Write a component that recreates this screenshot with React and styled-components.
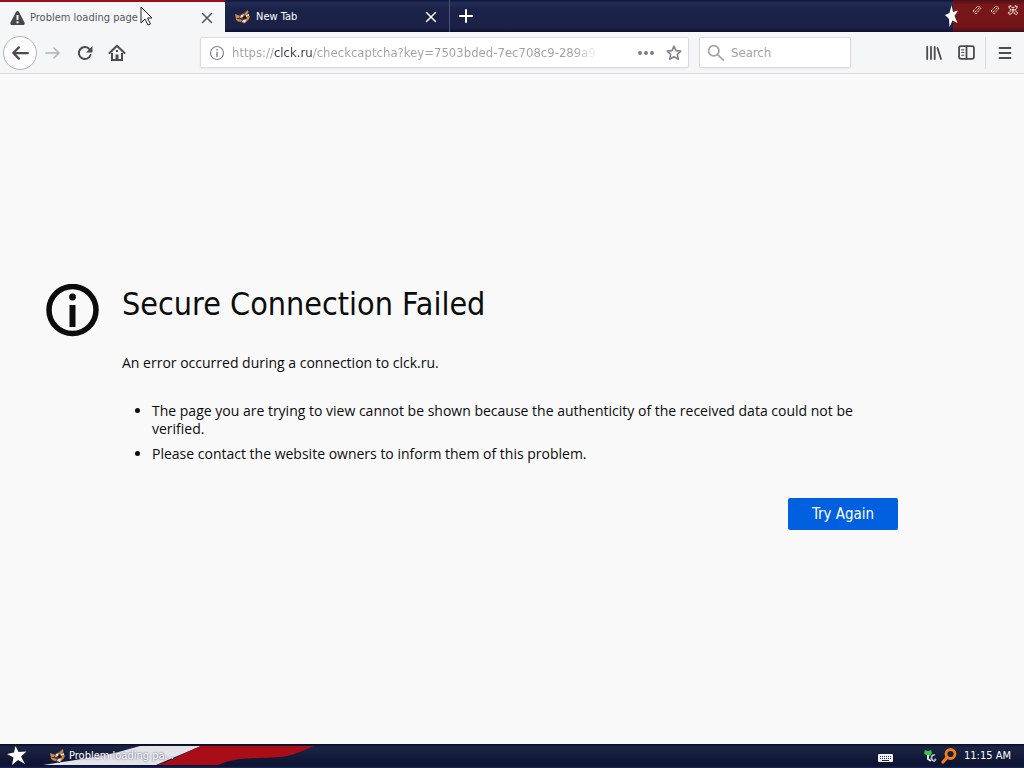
import React from "react";
import styled, { createGlobalStyle } from "styled-components";

const GlobalStyle = createGlobalStyle`
  * { box-sizing: border-box; }
  body {
    margin: 0;
    background: #f9f9fa;
    color: #0c0c0d;
    font-family: "DejaVu Sans Condensed", "DejaVu Sans", sans-serif;
  }
  button, input { font: inherit; }
`;

const Window = styled.div`
  min-height: 100vh;
  display: flex;
  flex-direction: column;
`;

const TitleBar = styled.header`
  display: flex;
  height: 32px;
  background: linear-gradient(#0d1438 0, #252e58 3px, #1b2349 8px, #1b2046 28px, #0b1030 32px);
`;

const Tab = styled.div`
  position: relative;
  flex: 0 1 225px;
  min-width: 0;
  display: flex;
  align-items: center;
  padding: 2px 10px 0 10px;
  border-top: ${(p) => (p.$active ? "2px solid #9c0d1b" : "0")};
  border-right: ${(p) => (p.$active ? "0" : "1px solid #4b5378")};
  background: ${(p) => (p.$active ? "#f5f6f7" : "transparent")};
  color: ${(p) => (p.$active ? "#55555a" : "#ffffff")};
`;

const TabTitle = styled.button`
  flex: 1;
  display: flex;
  align-items: center;
  gap: 5px;
  padding: 0;
  border: 0;
  background: none;
  color: inherit;
  font-size: 11px;
  line-height: 16px;
  white-space: nowrap;
`;

const IconButton = styled.button`
  display: flex;
  align-items: center;
  justify-content: center;
  width: ${(p) => p.$size || 32}px;
  height: ${(p) => p.$size || 32}px;
  flex: none;
  padding: 0;
  border: 0;
  background: none;
  color: ${(p) => p.$color || "inherit"};
`;

const Pointer = styled.svg`
  position: absolute;
  left: 140px;
  top: 4px;
`;

const StarDivider = styled.div`
  display: flex;
  align-items: center;
  margin-left: auto;
  margin-right: -6px;
  z-index: 1;
`;

const WindowControls = styled.div`
  display: flex;
  align-items: flex-start;
  gap: 2px;
  width: 71px;
  padding: 2px 2px 0 16px;
  background: linear-gradient(#4b1018 0, #7a1719 5px, #731517 27px, #3e0d1a 32px);
  color: #efe0d4;
`;

const NavBar = styled.nav`
  display: flex;
  align-items: center;
  height: 42px;
  padding: 0 3px;
  background: #f5f6f7;
  border-bottom: 1px solid #d8d8da;
  color: #4c4c50;
`;

const BackButton = styled(IconButton)`
  border: 1px solid #b4b4b6;
  border-radius: 50%;
  background: #fdfdfd;
`;

const Field = styled.div`
  display: flex;
  align-items: center;
  flex: ${(p) => p.$flex};
  min-width: 0;
  height: 31px;
  margin-left: ${(p) => p.$gap}px;
  padding: 0 ${(p) => p.$pad}px;
  background: #ffffff;
  border: 1px solid #dcdcde;
  border-radius: 2px;
  box-shadow: 0 1px 3px rgba(0, 0, 0, 0.05);
  color: #85858a;
`;

const TextInput = styled.input`
  flex: 1;
  min-width: 0;
  width: 0;
  padding: 0;
  border: 0;
  outline: 0;
  background: none;
  font-size: 13px;
  line-height: 18px;
  color: #8f8f94;
  &::placeholder { color: #a3a3a6; opacity: 1; }
`;

const AddressInput = styled(TextInput)`
  margin: 0 38px 0 7px;
  color: transparent;
  background: linear-gradient(
    90deg,
    #a0a0a3 42px, #38383d 42px, #38383d 80px, #a0a0a3 80px,
    #a0a0a3 calc(100% - 24px), transparent
  );
  background-clip: text;
  -webkit-background-clip: text;
`;

const BookmarkSlot = styled.span`
  margin: 0 -8px 0 4px;
`;

const SearchIconSlot = styled.span`
  display: flex;
  margin-right: 6px;
  color: #a5a5a8;
`;

const ToolGroup = styled.div`
  display: flex;
  margin-left: auto;
`;

const MenuSlot = styled.div`
  margin-left: 3px;
  padding-left: 3px;
  border-left: 1px solid #dcdcde;
`;

const Main = styled.main`
  flex: 1;
  display: flex;
  align-items: center;
  justify-content: center;
  padding: 0 126px 4px 46px;
`;

const ErrorPanel = styled.section`
  display: flex;
  align-items: flex-start;
  gap: 23px;
  width: 100%;
  max-width: 852px;
`;

const ErrorBody = styled.div`
  flex: 1;
  min-width: 0;
  display: flex;
  flex-direction: column;
  line-height: 18px;
`;

const Title = styled.h1`
  margin: 0 0 30px;
  font-size: 32px;
  line-height: 40px;
  font-weight: 400;
`;

const Message = styled.p`
  margin: 0 0 30px;
  font-family: "Open Sans", "Noto Sans", sans-serif;
  font-size: 14px;
`;

const Reasons = styled.ul`
  display: flex;
  flex-direction: column;
  gap: 7px;
  margin: 0 0 35px;
  padding: 0 20px 0 30px;
  font-family: "Open Sans", "Noto Sans", sans-serif;
  font-size: 14px;
`;

const PrimaryButton = styled.button`
  align-self: flex-end;
  width: 110px;
  height: 32px;
  padding: 0;
  border: 0;
  border-radius: 2px;
  background: #0060df;
  color: #ffffff;
  font-size: 15px;
`;

const TaskBar = styled.footer`
  position: relative;
  display: flex;
  align-items: center;
  height: 24px;
  padding: 0 13px 0 6px;
  background: linear-gradient(#070b20 0, #1b2445 3px, #141c3a 12px, #0c1230 22px, #1d2a5c 24px);
  color: #ffffff;
  font-size: 11px;
`;

const FlagArt = styled.svg`
  position: absolute;
  left: 0;
  top: 0;
`;

const TaskButton = styled.button`
  position: relative;
  display: flex;
  align-items: center;
  gap: 3px;
  margin-left: 22px;
  padding: 0;
  border: 0;
  background: none;
  color: inherit;
  line-height: 16px;
  text-shadow: 0 0 2px #27304f;
`;

const StartButton = styled(IconButton)`
  position: relative;
`;

const Tray = styled.div`
  display: flex;
  align-items: center;
  gap: 4px;
  margin-left: auto;
`;

const Clock = styled.time`
  margin-left: 3px;
  line-height: 16px;
`;

const KeyboardSlot = styled.span`
  display: flex;
  margin: 4px 26px 0 0;
`;

const Stroke = ({ size = 16, width = 2, children }) => (
  <svg width={size} height={size} viewBox="0 0 16 16" fill="none" stroke="currentColor" strokeWidth={width} strokeLinecap="round" strokeLinejoin="round" aria-hidden="true">
    {children}
  </svg>
);

const Close = () => (
  <Stroke width={1.5}><path d="M3.5 3.5l9 9M12.500 3.500l-9 9" /></Stroke>
);

const Star = () => (
  <svg width="20" height="20" viewBox="0 0 20 20" aria-hidden="true">
    <path fill="#fff" d="M8.500 0l3 6 8-.5-5.500 5 4 7.500-7-4-6 5 1.500-7.500L0 8l7-1.500z" />
  </svg>
);

const TitleStar = () => (
  <svg width="15" height="24" viewBox="0 0 15 24" aria-hidden="true">
    <path fill="#fff" d="M7.500 1L9 8l5-1.500L10.500 12l3 7-5-2.500L5.500 23 5 15l-4-4 4.500-2z" />
  </svg>
);

const Mascot = () => (
  <svg width="16" height="16" viewBox="0 0 16 16" aria-hidden="true">
    <path fill="#4a3730" d="M0 5l4 1 4-2 4-3 2 1v4l1 2-2 4-4 3-4-2-4-1z" />
    <path fill="#c58b62" d="M0 5l5 2-1 2H1zM9 5l4-4v3l-3 3zM3 10l4 1-1 2-4-1z" />
    <path fill="#eee0cc" d="M6 6l3-1-1 3-3 1zM11 6l3-1v2l-3 1zM8 11l4-1-2 4-3-1z" />
    <path fill="#cf8c32" d="M12 8l3-1-1 3-3 3zM1 9l3 2H1z" />
    <circle cx="9.500" cy="8.500" r="1.200" fill="#090a13" />
  </svg>
);

const Warning = () => (
  <svg width="15" height="14" viewBox="0 0 15 14" aria-hidden="true">
    <path fill="#47474b" d="M7.500 0c.7 0 1.200.3 1.500.9l5.500 10.700c.6 1.100-.1 2.400-1.400 2.400H1.900C.6 14-.1 12.700.5 11.600L6 .9C6.300.3 6.800 0 7.500 0z" />
    <path fill="#f5f6f7" d="M6.500 4h2v5h-2zM6.500 10.300h2v2h-2z" />
  </svg>
);

const Restore = () => (
  <svg width="12" height="12" viewBox="0 0 12 12" fill="none" stroke="currentColor" strokeWidth="1" strokeDasharray="1.500 .6" aria-hidden="true">
    <path d="M2 7l5-5 3 2-5 6zM4 8l4-4" />
  </svg>
);

const CloseWindow = () => (
  <svg width="12" height="12" viewBox="0 0 12 12" fill="none" stroke="currentColor" strokeWidth="1.200" strokeDasharray="1.500 .6" aria-hidden="true">
    <path d="M3 1.500l3 2.500 3-2.500L10.500 3 8 6l2.500 3L9 10.500 6 8l-3 2.500L1.500 9 4 6 1.500 3zM5 5l2 2M7 5L5 7" />
  </svg>
);

export default function App() {
  return (
    <Window>
      <GlobalStyle />
      <TitleBar>
        <Tab $active>
          <TabTitle><Warning />Problem loading page</TabTitle>
          <IconButton $size={16} aria-label="Close tab"><Close /></IconButton>
          <Pointer width="13" height="20" viewBox="0 0 13 20" aria-hidden="true">
            <path d="M1 1v16l4-4 3 6 2.500-1-3-6H12z" fill="#fff" stroke="#222" />
          </Pointer>
        </Tab>
        <Tab>
          <TabTitle><Mascot />New Tab</TabTitle>
          <IconButton $size={16} aria-label="Close tab"><Close /></IconButton>
        </Tab>
        <IconButton $color="#fff" aria-label="Open a new tab">
          <Stroke><path d="M8 2v12M2 8h12" /></Stroke>
        </IconButton>
        <StarDivider><TitleStar /></StarDivider>
        <WindowControls>
          <IconButton $size={16} aria-label="Minimize"><Restore /></IconButton>
          <IconButton $size={16} aria-label="Restore"><Restore /></IconButton>
          <IconButton $size={16} aria-label="Close window"><CloseWindow /></IconButton>
        </WindowControls>
      </TitleBar>

      <NavBar>
        <BackButton $size={34} aria-label="Back">
          <Stroke size={18}><path d="M15 8H2M7 3L2 8l5 5" /></Stroke>
        </BackButton>
        <IconButton $color="#b3b3b6" aria-label="Forward">
          <Stroke width={1.600}><path d="M1 8h13M9 3l5 5-5 5" /></Stroke>
        </IconButton>
        <IconButton aria-label="Reload">
          <svg width="16" height="16" viewBox="0 0 16 16" aria-hidden="true">
            <path d="M12.700 4.500A6 6 0 1 0 13.500 10" fill="none" stroke="currentColor" strokeWidth="2" strokeLinecap="round" />
            <path d="M15.500 1v6.500H9z" fill="currentColor" />
          </svg>
        </IconButton>
        <IconButton aria-label="Home">
          <svg width="18" height="18" viewBox="0 0 18 18" aria-hidden="true">
            <path d="M1.500 9L9 1.800 16.500 9" fill="none" stroke="currentColor" strokeWidth="2" strokeLinecap="round" strokeLinejoin="round" />
            <path d="M4 9v7h10V9" fill="none" stroke="currentColor" strokeWidth="2" />
            <path d="M7.500 10.500h3V16h-3zM8 6h2v2H8z" fill="currentColor" />
          </svg>
        </IconButton>
        <Field $flex="0 1 489px" $gap={67} $pad={8}>
          <Stroke width={1.200}><circle cx="8" cy="8" r="6.500" /><path d="M8 7.500v4M8 4.600v.4" strokeWidth="1.500" /></Stroke>
          <AddressInput aria-label="Address" defaultValue="https://clck.ru/checkcaptcha?key=7503bded-7ec708c9-289a989f" />
          <IconButton $size={20} aria-label="Page actions">
            <svg width="16" height="4" viewBox="0 0 16 4" fill="#77777b" aria-hidden="true">
              <circle cx="2" cy="2" r="1.900" /><circle cx="8" cy="2" r="1.900" /><circle cx="14" cy="2" r="1.900" />
            </svg>
          </IconButton>
          <BookmarkSlot>
            <IconButton $size={28} aria-label="Bookmark this page">
              <Stroke width={1.600}><path d="M8 1.200l2 4.400 4.800.5-3.500 3.200 1 4.900L8 11.800l-4.300 2.400 1-4.900L1.200 6.100 6 5.600z" /></Stroke>
            </IconButton>
          </BookmarkSlot>
        </Field>
        <Field $flex="0 1 152px" $gap={10} $pad={7}>
          <SearchIconSlot>
            <Stroke size={18} width={1.600}><circle cx="6" cy="6" r="4.600" /><path d="M9.500 9.500l5 4.800" /></Stroke>
          </SearchIconSlot>
          <TextInput type="search" aria-label="Search" placeholder="Search" />
        </Field>
        <ToolGroup>
          <IconButton aria-label="Library">
            <Stroke width={1.800}><path d="M1.200 2v12M5 2v12M8.700 2v12M11.500 3l3.500 11" /></Stroke>
          </IconButton>
          <IconButton aria-label="Sidebars">
            <Stroke size={17} width={1.700}><rect x="1" y="2" width="14" height="12" rx="2" /><path d="M8 2v12" /><path d="M3.500 5.500h2M3.500 8h2M3.500 10.500h2" strokeWidth="1" /></Stroke>
          </IconButton>
          <MenuSlot>
            <IconButton aria-label="Open menu">
              <Stroke width={1.800}><path d="M2.500 3h11M2.500 8h11M2.500 13h11" /></Stroke>
            </IconButton>
          </MenuSlot>
        </ToolGroup>
      </NavBar>

      <Main>
        <ErrorPanel>
          <svg width="53" height="53" viewBox="0 0 53 53" aria-hidden="true">
            <circle cx="26.500" cy="26" r="23.500" fill="none" stroke="#0c0c0d" strokeWidth="5.500" />
            <circle cx="26.500" cy="13" r="3.400" fill="#0c0c0d" />
            <path d="M23.500 21h6v22h-6z" fill="#0c0c0d" />
          </svg>
          <ErrorBody>
            <Title>Secure Connection Failed</Title>
            <Message>An error occurred during a connection to clck.ru.</Message>
            <Reasons>
              <li>The page you are trying to view cannot be shown because the authenticity of the received data could not be verified.</li>
              <li>Please contact the website owners to inform them of this problem.</li>
            </Reasons>
            <PrimaryButton>Try Again</PrimaryButton>
          </ErrorBody>
        </ErrorPanel>
      </Main>

      <TaskBar>
        <FlagArt width="340" height="24" viewBox="0 0 340 24" aria-hidden="true">
          <path d="M43 21C75 16 105 12 122 7L140 2h61L156 21z" fill="#e4e3ea" />
          <path d="M201 2h113c-12 5-22 10-34 11-22 2-40-1-62 8h-62c17-4 31-14 45-19z" fill="#a90e17" />
        </FlagArt>
        <StartButton $size={22} aria-label="Start"><Star /></StartButton>
        <TaskButton><Mascot />Problem loading pa...</TaskButton>
        <Tray>
          <KeyboardSlot>
            <svg width="15" height="8" viewBox="0 0 15 8" aria-hidden="true">
              <rect width="15" height="8" rx="1" fill="#f2f2f2" />
              <path d="M2 2.500h11M2 4.500h11" stroke="#222944" strokeDasharray="1 1" />
              <path d="M4 6.500h7" stroke="#222944" />
            </svg>
          </KeyboardSlot>
          <svg width="14" height="14" viewBox="0 0 14 14" aria-hidden="true">
            <path d="M2 1l3 1 3-1 1 3-2 3-4-1-2-2z" fill="#35c547" />
            <path d="M5 6v4l3 2" fill="none" stroke="#dfe7df" strokeWidth="2" />
            <path d="M12 6c-4-1-5 5-1 6l2-2" fill="none" stroke="#b9bcc5" strokeWidth="1.800" />
          </svg>
          <svg width="16" height="16" viewBox="0 0 16 16" fill="none" stroke="#f57c16" aria-hidden="true">
            <circle cx="9.500" cy="6" r="4.500" strokeWidth="2.800" />
            <path d="M6 9.500L2 14" strokeWidth="3.200" strokeLinecap="round" />
          </svg>
          <Clock>11:15 AM</Clock>
        </Tray>
      </TaskBar>
    </Window>
  );
}
